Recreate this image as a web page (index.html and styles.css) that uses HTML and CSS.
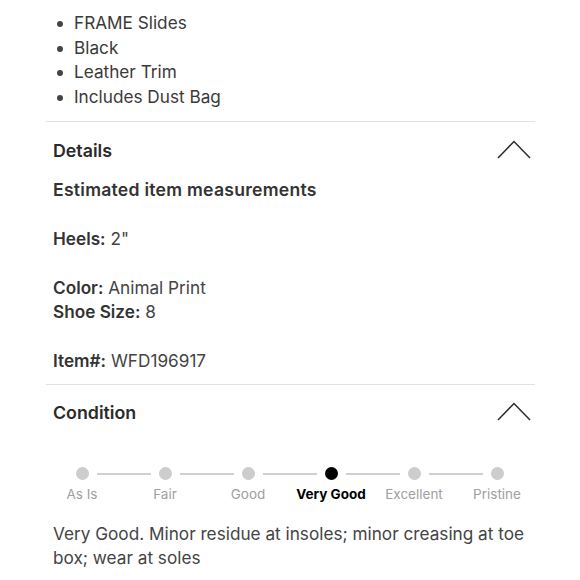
FILE: index.html
```html
<!DOCTYPE html>
<html>
<head>
<meta charset="utf-8">
<link rel="stylesheet" href="styles.css">
</head>
<body>
<div class="page">
  <ul class="features">
    <li>FRAME Slides</li>
    <li>Black</li>
    <li>Leather Trim</li>
    <li>Includes Dust Bag</li>
  </ul>
  <section class="panel">
    <div class="panel-head">
      <h2>Details</h2>
      <svg class="chev" width="34" height="20" viewBox="0 0 34 20"><polyline points="1,18 17,1.5 33,18" fill="none" stroke="#2b2b2b" stroke-width="1.5"/></svg>
    </div>
    <div class="details">
      <p class="sub">Estimated item measurements</p>
      <p class="blank"></p>
      <p><b>Heels:</b> 2"</p>
      <p class="blank"></p>
      <p><b>Color:</b> Animal Print</p>
      <p><b>Shoe Size:</b> 8</p>
      <p class="blank"></p>
      <p><b>Item#:</b> WFD196917</p>
    </div>
  </section>
  <section class="panel last">
    <div class="panel-head">
      <h2>Condition</h2>
      <svg class="chev" width="34" height="20" viewBox="0 0 34 20"><polyline points="1,18 17,1.5 33,18" fill="none" stroke="#2b2b2b" stroke-width="1.5"/></svg>
    </div>
    <div class="steps">
      <div class="track">
        <span class="dot"></span><span class="line"></span>
        <span class="dot"></span><span class="line"></span>
        <span class="dot"></span><span class="line"></span>
        <span class="dot on"></span><span class="line"></span>
        <span class="dot"></span><span class="line"></span>
        <span class="dot"></span>
      </div>
      <div class="labels">
        <span>As Is</span>
        <span>Fair</span>
        <span>Good</span>
        <span class="on">Very Good</span>
        <span>Excellent</span>
        <span>Pristine</span>
      </div>
    </div>
    <p class="desc">Very Good. Minor residue at insoles; minor creasing at toe box; wear at soles</p>
  </section>
</div>
</body>
</html>
```
FILE: styles.css
```css
html, body {
  margin: 0;
  padding: 0;
  background: #ffffff;
}
body {
  font-family: Inter, "Liberation Sans", Arial, sans-serif;
  color: #333333;
  font-size: 17.2px;
}
.page {
  margin-left: 46px;
  width: 489px;
}
.features {
  margin: 0;
  padding: 11px 0 12px 28px;
  list-style: none;
  border-bottom: 1px solid #e2e2e2;
}
.features li {
  position: relative;
  line-height: 24.6px;
  color: #3a3a3a;
}
.features li::before {
  content: "";
  position: absolute;
  left: -17px;
  top: 10px;
  width: 6px;
  height: 6px;
  border-radius: 50%;
  background: #444;
}
.panel {
  border-bottom: 1px solid #e2e2e2;
  padding: 0 0 0 7px;
}
.panel.last {
  border-bottom: none;
}
.panel-head {
  display: flex;
  justify-content: space-between;
  align-items: center;
  height: 58px;
  padding-right: 4px;
}
.panel-head h2 {
  margin: -2px 0 0;
  font-size: 17.8px;
  font-weight: 600;
  color: #2a2a2a;
}
.chev {
  display: block;
  margin-top: -3px;
}
.details {
  padding-bottom: 10px;
}
.details p {
  margin: 0;
  line-height: 24.4px;
  color: #444;
}
.details p.sub {
  font-size: 17.6px;
  letter-spacing: 0.25px;
  font-weight: 600;
  color: #333;
  margin-top: -2px;
}
.details b {
  font-weight: 600;
  color: #333;
}
.details p.blank {
  height: 24.4px;
}
.steps {
  margin-left: -12.5px;
  width: 498px;
  padding-top: 24px;
}
.track {
  display: flex;
  align-items: center;
  margin: 0 35px;
  height: 14px;
}
.dot {
  width: 13px;
  height: 13px;
  border-radius: 50%;
  background: #cdcdcd;
  flex: none;
}
.dot.on {
  background: #000;
}
.line {
  flex: 1;
  height: 2px;
  background: #d0d0d0;
  margin: 0 8px;
}
.labels {
  display: grid;
  grid-template-columns: repeat(6, 1fr);
  text-align: center;
  font-size: 13.5px;
  color: #a0a0a0;
  margin-top: 5px;
}
.labels .on {
  color: #000;
  font-weight: 700;
}
.desc {
  margin: 20px 0 0;
  line-height: 24.4px;
  color: #444;
  padding-right: 4px;
}
```
